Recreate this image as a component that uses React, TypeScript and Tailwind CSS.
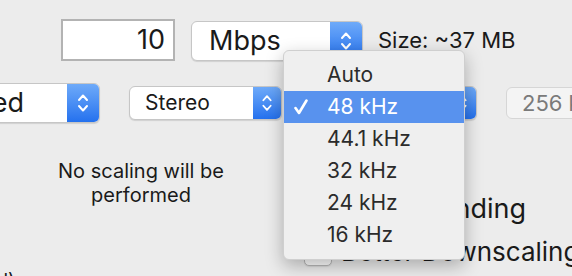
import type { ReactNode } from "react";

const FONT = "font-['Inter','Noto_Sans',sans-serif]";

/** Flechas arriba/abajo del selector estilo macOS. */
function Stepper({ h }: { h: number }) {
  return (
    <svg width="14" height={h > 36 ? 24 : 22} viewBox="0 0 14 24" fill="none">
      <path d="M3 9 L7 4.5 L11 9" stroke="white" strokeWidth="2" strokeLinecap="round" strokeLinejoin="round" />
      <path d="M3 15 L7 19.5 L11 15" stroke="white" strokeWidth="2" strokeLinecap="round" strokeLinejoin="round" />
    </svg>
  );
}

function Popup({
  children,
  className,
  h,
  stepW = 32,
}: {
  children: ReactNode;
  className: string;
  h: number;
  stepW?: number;
}) {
  return (
    <div
      className={`flex shrink-0 overflow-hidden rounded-[6px] border border-[#c6c6c6] bg-white shadow-[0_1px_1px_rgba(0,0,0,0.12)] ${className}`}
      style={{ height: h }}
    >
      <div className="flex min-w-0 flex-1 items-center">{children}</div>
      <div
        className="flex items-center justify-center bg-linear-to-b from-[#6eaaf9] to-[#2471ee]"
        style={{ width: stepW }}
      >
        <Stepper h={h} />
      </div>
    </div>
  );
}

function Checkbox() {
  return <span className="h-[27px] w-[28px] shrink-0 rounded-[5px] border border-[#b9b9b9] bg-white shadow-[0_1px_1px_rgba(0,0,0,0.08)]" />;
}

const rates = ["Auto", "48 kHz", "44.1 kHz", "32 kHz", "24 kHz", "16 kHz"];

export default function App() {
  return (
    <div className={`relative h-[276px] w-[572px] overflow-hidden bg-[#ececec] text-[#1a1a1a] ${FONT}`}>
      {/* fila bitrate */}
      <div className="flex items-center pt-[19px]">
        <div className="ml-[61px] flex h-[42px] w-[114px] items-center justify-end border-2 border-[#b3b3b3] bg-white pr-[8px] text-[27px]">
          10
        </div>
        <Popup className="ml-[16px] mt-[2px] w-[172px]" h={40}>
          <span className="pl-[17px] text-[27px]">Mbps</span>
        </Popup>
        <span className="ml-[15px] text-[22px]">Size: ~37 MB</span>
      </div>

      {/* fila audio */}
      <div className="mt-[22px] flex items-center">
        <Popup className="-ml-[40px] w-[140px]" h={40}>
          <div className="flex w-[63px] justify-end whitespace-nowrap text-[27px]">Enabled</div>
        </Popup>
        <Popup className="ml-[29px] w-[153px]" h={34} stepW={28}>
          <span className="pl-[15px] text-[21px]">Stereo</span>
        </Popup>
        <Popup className="ml-[25px] w-[170px]" h={34} stepW={28}>
          <span className="pl-[20px] text-[21px]">48 kHz</span>
        </Popup>
        <div className="ml-[29px] flex h-[32px] w-[110px] shrink-0 items-center rounded-[6px] border border-[#d6d6d6] bg-[#f4f4f4] pl-[15px] text-[22px] whitespace-nowrap text-[#7a7a7a]">
          256 kbps
        </div>
      </div>

      {/* fila escalado */}
      <div className="flex">
        <div className="w-[282px] shrink-0">
          <p className="pt-[36px] text-center text-[20px] leading-[24px]">
            No scaling will be
            <br />
            performed
          </p>
          <div className="mt-[62px] flex w-[15px] justify-end whitespace-nowrap text-[19px] leading-[24px]">
            (Original)
          </div>
        </div>
        <div className="flex flex-1 flex-col">
          <div className="flex justify-end pt-[14px]">
            <span className="h-[50px] w-[40px] shrink-0 translate-x-[37px] rounded-[6px] bg-[#a6c8f6]" />
          </div>
          <label className="mt-[7px] flex h-[30px] items-center gap-[9px] pl-[22px]">
            <Checkbox />
            <span className="flex w-[185px] justify-end whitespace-nowrap text-[27px] leading-[30px]">Frame Blending</span>
          </label>
          <label className="mt-[13px] flex h-[30px] items-center gap-[9px] pl-[22px]">
            <Checkbox />
            <span className="whitespace-nowrap text-[26px] leading-[30px]">Better Downscaling</span>
          </label>
        </div>
      </div>

      {/* menú desplegable abierto */}
      <ul className="absolute left-[283px] top-[50px] w-[182px] rounded-[6px] border border-[#cfcfcf] bg-[#efefef] py-[8px] shadow-[0_6px_18px_rgba(0,0,0,0.28)]">
        {rates.map((r) => {
          const sel = r === "48 kHz";
          return (
            <li
              key={r}
              className={`relative flex h-[32px] items-center pl-[43px] text-[21px] ${
                sel ? "bg-[#5892ee] text-white" : "text-[#2b2b2b]"
              }`}
            >
              {sel && (
                <svg className="absolute left-[10px] top-[8px]" width="14" height="16" viewBox="0 0 14 16" fill="none">
                  <path d="M1.5 9 L5 14 L12.5 1.5" stroke="white" strokeWidth="2.6" strokeLinecap="round" strokeLinejoin="round" />
                </svg>
              )}
              {r}
            </li>
          );
        })}
      </ul>
    </div>
  );
}
